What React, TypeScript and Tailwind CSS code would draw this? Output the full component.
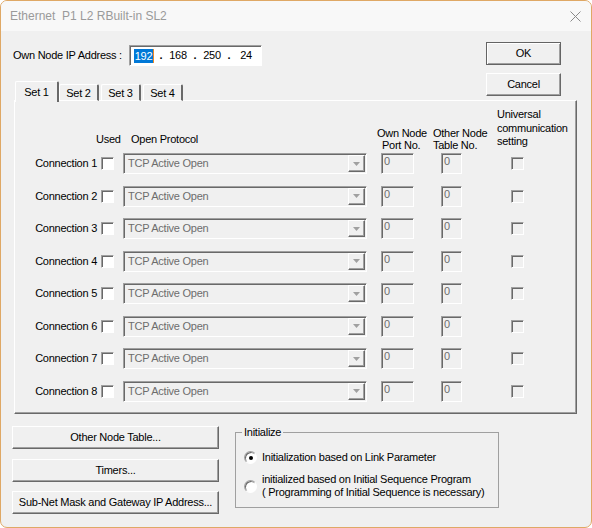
import { useState } from 'react';

// classic 3D edges
const raised =
  'border border-t-white border-l-white border-r-[#696969] border-b-[#696969] shadow-[inset_-1px_-1px_0_#a0a0a0]';
const sunken =
  'border border-t-[#a0a0a0] border-l-[#a0a0a0] border-r-white border-b-white shadow-[inset_1px_1px_0_#696969]';

const connections = [1, 2, 3, 4, 5, 6, 7, 8];
const tabs = ['Set 1', 'Set 2', 'Set 3', 'Set 4'];

function PushButton({ label, className = '' }: { label: string; className?: string }) {
  return (
    <button
      type="button"
      className={`${raised} bg-[#f0f0f0] flex items-center justify-center text-black leading-[13px] ${className}`}
    >
      {label}
    </button>
  );
}

function CheckBox({
  checked,
  disabled,
  onToggle,
}: {
  checked: boolean;
  disabled?: boolean;
  onToggle?: () => void;
}) {
  return (
    <span
      onClick={disabled ? undefined : onToggle}
      className={`${sunken} w-[13px] h-[13px] shrink-0 flex items-center justify-center ${
        disabled ? 'bg-[#f0f0f0]' : 'bg-white cursor-pointer'
      }`}
    >
      {checked && (
        <svg width="9" height="9" viewBox="0 0 9 9">
          <path d="M1 4l2.5 2.5L8 1.5" stroke="#000" strokeWidth="1.6" fill="none" />
        </svg>
      )}
    </span>
  );
}

function ProtocolCombo() {
  return (
    <div className={`${sunken} w-[244px] h-[21px] p-[1px] flex items-stretch bg-[#f0f0f0]`}>
      <span className="flex-1 pl-[3px] flex items-center text-[#6d6d6d]">TCP Active Open</span>
      <span className={`${raised} w-[17px] flex items-center justify-center`}>
        <svg width="7" height="4" viewBox="0 0 7 4">
          <path d="M0 0h7L3.5 4z" fill="#a0a0a0" />
        </svg>
      </span>
    </div>
  );
}

function NumberBox({ width }: { width: string }) {
  return (
    <div className={`${sunken} ${width} h-[21px] pl-[2px] pt-[1px] bg-[#f0f0f0] text-[#6d6d6d] leading-[13px]`}>
      0
    </div>
  );
}

function Radio({ checked, onSelect }: { checked: boolean; onSelect: () => void }) {
  return (
    <span
      onClick={onSelect}
      className="w-[13px] h-[13px] shrink-0 rounded-full border border-t-[#a0a0a0] border-l-[#a0a0a0] border-r-white border-b-white bg-white shadow-[inset_1px_1px_0_#696969] flex items-center justify-center cursor-pointer"
    >
      {checked && <span className="w-[4px] h-[4px] rounded-full bg-black" />}
    </span>
  );
}

export default function App() {
  const [activeTab, setActiveTab] = useState(0);
  const [used, setUsed] = useState<boolean[]>(connections.map(() => false));
  const [initMode, setInitMode] = useState(0);

  const toggleUsed = (i: number) => {
    setUsed((prev) => prev.map((u, idx) => (idx === i ? !u : u)));
  };

  return (
    <div className="w-[592px] h-[528px] bg-white font-['Liberation_Sans',Arial,sans-serif] text-[11px] leading-[13px] tracking-[-0.25px] text-black">
      <div className="w-full h-full border border-[#dfa865] rounded-[7px] overflow-hidden bg-[#f0f0f0] flex flex-col">
        {/* Title bar */}
        <div className="h-[30px] shrink-0 bg-[#f8f8f8] flex items-center justify-between pl-[9px] pr-[9px]">
          <span className="text-[12px] tracking-normal text-[#9a9a9a] whitespace-pre">Ethernet  P1 L2 RBuilt-in SL2</span>
          <svg width="11" height="11" viewBox="0 0 11 11" className="mr-[1px]">
            <path d="M0.5 0.5l10 10M10.5 0.5l-10 10" stroke="#8a8a8a" strokeWidth="1" />
          </svg>
        </div>

        <div className="flex-1 pl-[11px] pr-[14px]">
          {/* IP address, tabs and OK / Cancel */}
          <div className="flex justify-between items-start">
            <div className="flex flex-col">
              <div className="mt-[14px] ml-[1px] flex items-center">
                <span className="w-[116px]">Own Node IP Address :</span>
                <div className={`${sunken} w-[133px] h-[21px] bg-white flex items-center pl-[1px]`}>
                  <span className="w-[26px] flex justify-center">
                    <span className="bg-[#0078d7] text-white px-[1px] leading-[14px]">192</span>
                    <span className="w-[1px] h-[14px] bg-[#f08a24]" />
                  </span>
                  <span className="w-[8px] text-center font-bold">.</span>
                  <span className="w-[26px] text-center">168</span>
                  <span className="w-[8px] text-center font-bold">.</span>
                  <span className="w-[26px] text-center">250</span>
                  <span className="w-[8px] text-center font-bold">.</span>
                  <span className="w-[26px] text-center">24</span>
                </div>
              </div>

              <div className="mt-[15px] ml-[3px] flex items-end h-[20px] relative z-10">
                {tabs.map((t, i) => {
                  const active = i === activeTab;
                  return (
                    <button
                      key={t}
                      type="button"
                      onClick={() => setActiveTab(i)}
                      className={`border-t border-l border-t-white border-l-white border-r-2 border-r-[#696969] rounded-t-[2px] flex justify-center bg-[#f0f0f0] ${
                        active
                          ? 'w-[44px] h-[21px] -mb-[1px] pt-[4px] z-10'
                          : `w-[40px] h-[17px] pt-[2px] border-b border-b-white ${i > 1 ? 'ml-[2px]' : ''}`
                      }`}
                    >
                      {t}
                    </button>
                  );
                })}
              </div>
            </div>

            <div className="mt-[11px] mr-[16px] flex flex-col gap-[8px]">
              <button
                type="button"
                className="w-[75px] h-[23px] border border-[#646464] shadow-[inset_1px_1px_0_#fff,inset_-1px_-1px_0_#a0a0a0] bg-[#f0f0f0] flex items-center justify-center"
              >
                OK
              </button>
              <PushButton label="Cancel" className="w-[75px] h-[23px]" />
            </div>
          </div>

          {/* Connection settings */}
          <div className={`${raised} ml-[2px] -mt-[1px] h-[314px] pt-[7px]`}>
            <div className="flex items-start h-[45px]">
              <span className="w-[81px]" />
              <span className="w-[24px] mt-[25px] text-center">Used</span>
              <span className="w-[246px] ml-[11px] mt-[25px]">Open Protocol</span>
              <span className="w-[56px] mt-[19px] leading-[12px] flex flex-col">
                <span>Own Node</span>
                <span className="pl-[5px]">Port No.</span>
              </span>
              <span className="w-[64px] mt-[19px] leading-[12px] flex flex-col">
                <span>Other Node</span>
                <span>Table No.</span>
              </span>
              <span className="leading-[13.5px] flex flex-col">
                <span>Universal</span>
                <span>communication</span>
                <span>setting</span>
              </span>
            </div>

            <div className="flex flex-col gap-[11.57px]">
              {connections.map((n, i) => (
                <div key={n} className="flex items-center h-[21px]">
                  <span className="w-[82px] text-right">Connection {n}</span>
                  <span className="ml-[4px]">
                    <CheckBox checked={used[i]} onToggle={() => toggleUsed(i)} />
                  </span>
                  <span className="ml-[9px]">
                    <ProtocolCombo />
                  </span>
                  <span className="ml-[14px]">
                    <NumberBox width="w-[33px]" />
                  </span>
                  <span className="ml-[27px]">
                    <NumberBox width="w-[21px]" />
                  </span>
                  <span className="ml-[49px]">
                    <CheckBox checked={false} disabled />
                  </span>
                </div>
              ))}
            </div>
          </div>

          {/* Bottom buttons and Initialize group */}
          <div className="mt-[12px] flex items-start">
            <div className="w-[207px] flex flex-col gap-[9.5px]">
              <PushButton label="Other Node Table..." className="h-[23px]" />
              <PushButton label="Timers..." className="h-[23px]" />
              <PushButton label="Sub-Net Mask and Gateway IP Address..." className="h-[23px]" />
            </div>

            <fieldset className="ml-[16px] w-[264px] h-[82px] border border-[#a0a0a0] pl-[8px]">
              <legend className="ml-[-2px] px-[2px] leading-[13px]">Initialize</legend>
              <div className="mt-[12px] flex items-center gap-[5px]">
                <Radio checked={initMode === 0} onSelect={() => setInitMode(0)} />
                <span>Initialization based on Link Parameter</span>
              </div>
              <div className="mt-[9px] flex items-center gap-[5px]">
                <Radio checked={initMode === 1} onSelect={() => setInitMode(1)} />
                <span className="flex flex-col">
                  <span>initialized based on Initial Sequence Program</span>
                  <span>( Programming of Initial Sequence is necessary)</span>
                </span>
              </div>
            </fieldset>
          </div>
        </div>
      </div>
    </div>
  );
}
